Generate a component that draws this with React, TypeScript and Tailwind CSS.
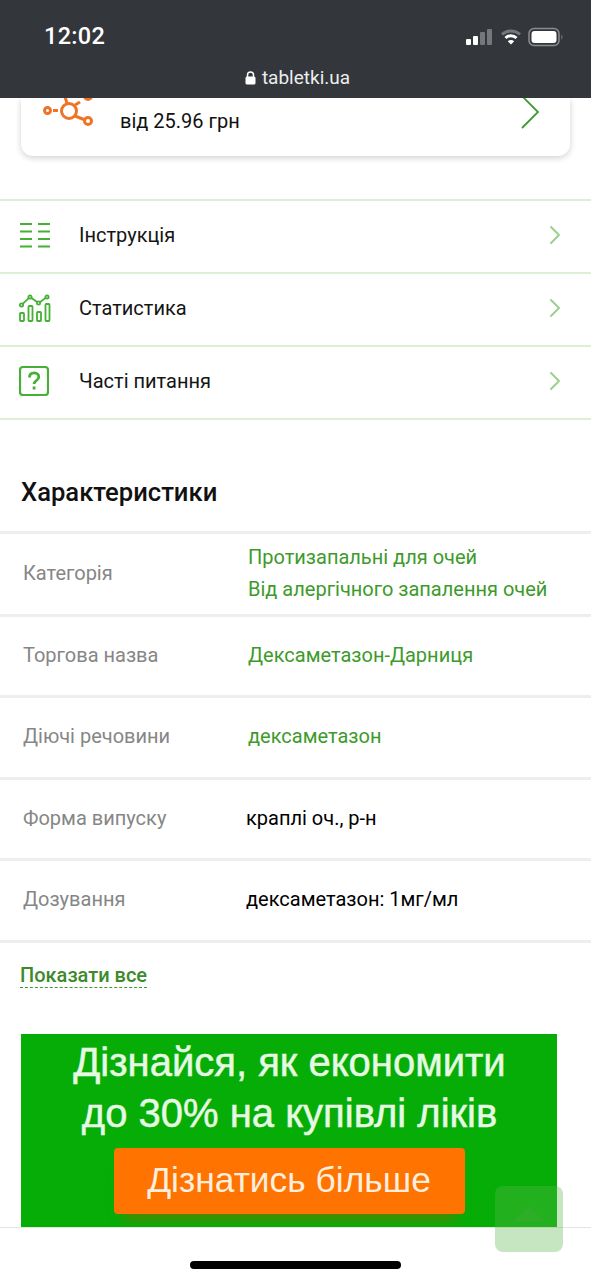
import { ChevronRight } from 'lucide-react'

const rowFont = "font-['Roboto',sans-serif]"

function Signal() {
  return (
    <svg width="28" height="18" viewBox="0 0 28 18">
      <rect x="0" y="11" width="5" height="6" rx="1" fill="#fff" />
      <rect x="7" y="8" width="5" height="9" rx="1" fill="#fff" />
      <rect x="14" y="4" width="5" height="13" rx="1" fill="#75777a" />
      <rect x="21" y="1" width="5" height="16" rx="1" fill="#75777a" />
    </svg>
  )
}

function Wifi() {
  return (
    <svg width="22" height="18" viewBox="0 0 22 18" fill="none">
      <path d="M2 6.5C7 1.7 15 1.7 20 6.5" stroke="#75777a" strokeWidth="3" />
      <path d="M5.5 10C8.6 7 13.4 7 16.5 10" stroke="#fff" strokeWidth="3" />
      <path d="M11 16.5L7.8 13.2C9.6 11.6 12.4 11.6 14.2 13.2Z" fill="#fff" />
    </svg>
  )
}

function Battery() {
  return (
    <svg width="36" height="20" viewBox="0 0 36 20" fill="none">
      <rect x="1" y="1.5" width="30" height="17" rx="5" stroke="#8a8c8f" strokeWidth="1.5" />
      <rect x="3.5" y="4" width="25" height="12" rx="3" fill="#fff" />
      <path d="M33.5 7.5c1.2.4 1.2 4.6 0 5z" fill="#8a8c8f" />
    </svg>
  )
}

function NetworkIcon() {
  return (
    <svg width="52" height="50" viewBox="0 0 52 50" fill="none" stroke="#f07427" strokeWidth="3">
      <circle cx="26" cy="26" r="7.5" />
      <circle cx="4.5" cy="25.5" r="3" />
      <circle cx="45" cy="36" r="3.5" />
      <circle cx="45" cy="11" r="3.5" />
      <path d="M10 25.5h5" />
      <path d="M32 31l9 3.5" />
      <path d="M32 20l5-3" />
      <path d="M22 12l2 6" />
    </svg>
  )
}

function ListIcon() {
  return (
    <svg width="32" height="26" viewBox="0 0 32 26" fill="none" stroke="#45b035" strokeWidth="2.2">
      <path d="M1 2h12M19 2h12M1 9.500h12M19 9.500h12M1 17h12M19 17h12M1 24.500h12M19 24.500h12" />
    </svg>
  )
}

function StatsIcon() {
  return (
    <svg width="32" height="28" viewBox="0 0 32 28" fill="none" stroke="#45b035" strokeWidth="1.8">
      <rect x="1" y="19" width="4" height="8" rx="0.8" />
      <rect x="9.500" y="12" width="4" height="15" rx="0.8" />
      <rect x="18" y="18" width="4" height="9" rx="0.8" />
      <rect x="26.500" y="10" width="4" height="17" rx="0.8" />
      <circle cx="2.500" cy="11" r="1.600" />
      <circle cx="11" cy="3" r="1.600" />
      <circle cx="19.500" cy="9" r="1.600" />
      <circle cx="28" cy="3" r="1.600" />
      <path d="M3.700 9.800 9.800 4.200M12.400 4 18.200 8M20.900 8.200 26.600 3.900" />
    </svg>
  )
}

function QuestionIcon() {
  return (
    <svg width="30" height="30" viewBox="0 0 30 30" fill="none">
      <rect x="1" y="1" width="28" height="28" rx="3" stroke="#45b035" strokeWidth="2.2" />
      <path d="M10.500 11.500c0-3 2-4.700 4.700-4.700s4.600 1.700 4.600 4.100c0 3.500-4.700 3.700-4.700 7.100" stroke="#45b035" strokeWidth="2.800" />
      <rect x="13.700" y="20.500" width="2.800" height="3" fill="#45b035" />
    </svg>
  )
}

const menuRows = [
  { label: 'Інструкція', icon: <ListIcon /> },
  { label: 'Статистика', icon: <StatsIcon /> },
  { label: 'Часті питання', icon: <QuestionIcon /> },
]

const specRows = [
  { name: 'Торгова назва', value: 'Дексаметазон-Дарниця', green: true },
  { name: 'Діючі речовини', value: 'дексаметазон', green: true },
  { name: 'Форма випуску', value: 'краплі оч., р-н', green: false },
  { name: 'Дозування', value: 'дексаметазон: 1мг/мл', green: false },
]

export default function App() {
  return (
    <div className={`relative flex h-[1280px] w-[591px] flex-col overflow-hidden bg-white ${rowFont}`}>
      {/* browser chrome */}
      <div className="relative z-10 flex h-[98px] shrink-0 flex-col bg-[#33363b] text-white">
        <div className="flex h-[71px] items-center justify-between pl-11 pr-[27px] pt-[2px]">
          <span className="text-[23.500px] font-medium tracking-[0.3px]">12:02</span>
          <div className="flex items-center gap-[6px]">
            <Signal />
            <Wifi />
            <Battery />
          </div>
        </div>
        <div className="flex items-center justify-center gap-[6px] pl-[4px] text-[19px] leading-[14px] text-[#eceded]">
          <svg width="11" height="14" viewBox="0 0 11 14" fill="#fff">
            <path d="M2.500 6V4a3 3 0 0 1 6 0v2" fill="none" stroke="#fff" strokeWidth="1.500" />
            <rect x="0.500" y="5.500" width="10" height="8" rx="1.500" />
          </svg>
          tabletki.ua
        </div>
      </div>

      {/* price card, mostly scrolled under the chrome */}
      <div className="mx-[21px] flex h-[58px] w-[549px] shrink-0 overflow-hidden rounded-b-[12px] bg-white shadow-[0_2px_6px_rgba(0,0,0,0.18)]">
        <div className="ml-[22px] -mt-[13px] h-[50px] w-[52px] shrink-0">
          <NetworkIcon />
        </div>
        <div className="ml-[25px] mt-[9px] text-[20px] leading-[28px] text-[#111]">від 25.96 грн</div>
        <div className="ml-auto mr-[30px] -mt-[6px] flex h-[40px] items-center">
          <svg width="20" height="36" viewBox="0 0 20 36" fill="none" stroke="#3f9a35" strokeWidth="1.800">
            <path d="M2 2 18 18 2 34" />
          </svg>
        </div>
      </div>

      {/* menu links */}
      <div className="mt-[43px] border-t-2 border-[#dcf0d6]">
        {menuRows.map((row) => (
          <div key={row.label} className="flex h-[73px] items-center border-b-2 border-[#dcf0d6] pb-[3px] pl-[19px] pr-[20px]">
            <div className="flex w-[60px] shrink-0 items-center">{row.icon}</div>
            <span className="text-[20px] text-[#151515]">{row.label}</span>
            <ChevronRight className="ml-auto h-[32px] w-[32px] text-[#9bd08f]" strokeWidth={1.500} />
          </div>
        ))}
      </div>

      <h2 className="mt-[55px] pl-[21px] text-[25.600px] leading-[34px] font-medium text-[#111]">Характеристики</h2>

      {/* specs table */}
      <div className="mt-[22px] border-t-[3px] border-[#eeeeee] text-[20px]">
        <div className="flex h-[82.500px] items-center border-b-[3px] border-[#eeeeee] pb-[2px] pl-[23px]">
          <div className="w-[224px] shrink-0 text-[#868686]">Категорія</div>
          <div className="ml-px leading-[32px] text-[#3d9a2b]">
            <div>Протизапальні для очей</div>
            <div>Від алергічного запалення очей</div>
          </div>
        </div>
        {specRows.map((row) => (
          <div key={row.name} className="flex h-[81.500px] items-center border-b-[3px] border-[#eeeeee] pb-[2px] pl-[23px]">
            <div className="w-[224px] shrink-0 text-[#868686]">{row.name}</div>
            <div className={row.green ? 'ml-px text-[#3d9a2b]' : '-ml-px text-black'}>{row.value}</div>
          </div>
        ))}
      </div>

      <div className="mt-[21px] flex pl-5">
        <span className="block border-b border-dashed border-[#3d9a2b] text-[20px] leading-[23px] font-medium text-[#3d8a2c]">
          Показати все
        </span>
      </div>

      {/* promo banner */}
      <div className="ml-[21px] mt-[46.500px] flex h-[193px] w-[536px] shrink-0 flex-col items-center overflow-hidden bg-[#07ad07] font-['Liberation_Sans',sans-serif] text-[#e6f9e2]">
        <div className="mt-[3px] pl-px text-center text-[40px] leading-[51px] [-webkit-text-stroke:0.5px_#e6f9e2]">
          <div>Дізнайся, як економити</div>
          <div>до 30% на купівлі ліків</div>
        </div>
        <div className="mt-[9px] flex h-[66px] w-[351px] shrink-0 items-center justify-center rounded-[4px] bg-[#ff7300] text-[35.400px] text-[#fdeede] shadow-[0_14px_12px_-10px_rgba(110,120,0,0.9)]">
          Дізнатись більше
        </div>
      </div>

      {/* bottom bar */}
      <div className="flex-1 border-t border-[#dfe6dc] bg-white" />
      <div className="absolute bottom-[11px] left-[190px] h-2 w-[211px] rounded-full bg-black" />

      <div className="absolute left-[495px] top-[1186px] flex h-[66px] w-[68px] justify-center rounded-[8px] bg-[#59b84a]/35 pt-[20px]">
        <div className="h-0 w-0 border-x-[16px] border-b-[16px] border-x-transparent border-b-[#39a92e]/50" />
      </div>
    </div>
  )
}
